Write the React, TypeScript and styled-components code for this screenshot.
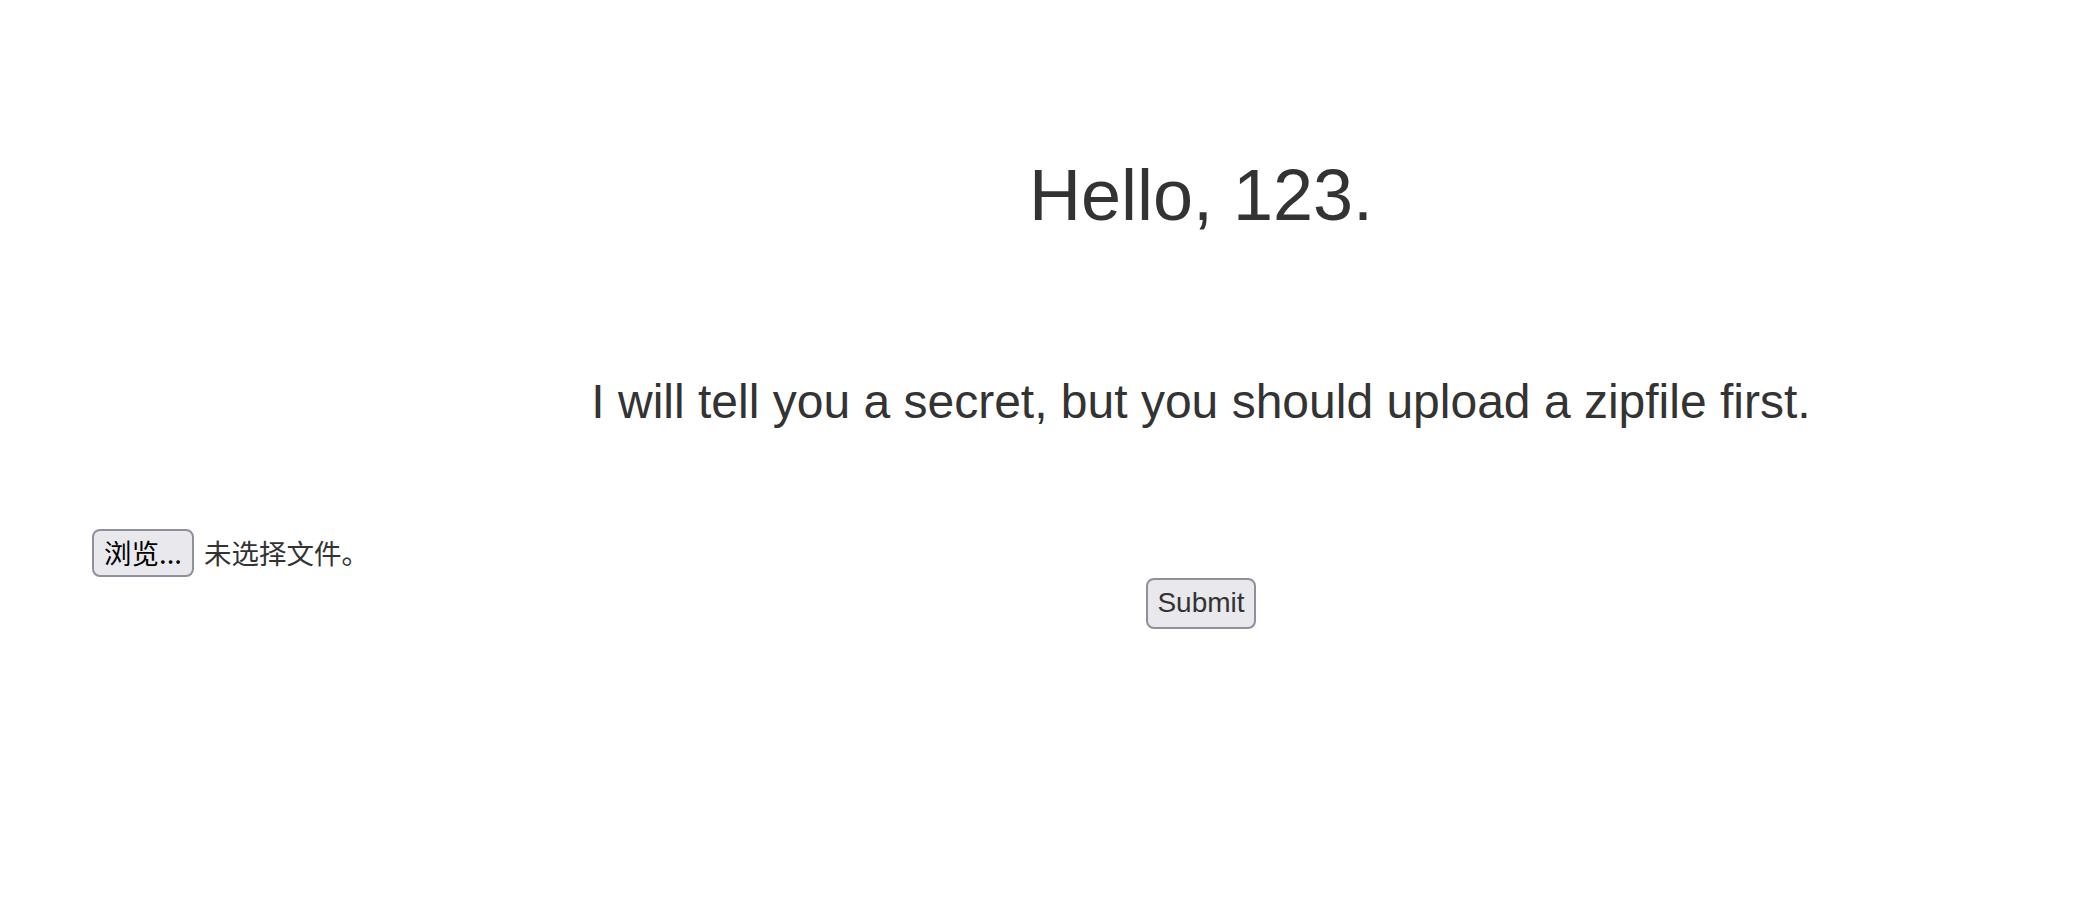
import React from 'react';
import styled, { createGlobalStyle } from 'styled-components';

const GlobalStyle = createGlobalStyle`
  html, body {
    margin: 0;
    padding: 0;
    background: #fff;
  }
  body {
    font-family: "Liberation Sans", Arial, "Noto Sans CJK SC", sans-serif;
    color: #333;
    font-size: 28px;
    line-height: 1.428571;
  }
`;

const Page = styled.div`
  width: 100%;
  min-height: 905px;
  padding-top: 156px;
  box-sizing: border-box;
`;

const Center = styled.div`
  padding-left: 318px;
  text-align: center;
`;

const Title = styled.h1`
  margin: 0;
  font-size: 72px;
  font-weight: 500;
  line-height: 1.1;
`;

const Lead = styled.h3`
  margin: 141px 0 0;
  font-size: 48px;
  font-weight: 500;
  line-height: 1.1;
`;

const Form = styled.form`
  margin-top: 100px;
`;

const FileRow = styled.div`
  display: flex;
  align-items: center;
  gap: 10px;
  margin-left: 92px;
  height: 48px;
  font-family: "Noto Sans CJK SC", "Liberation Sans", sans-serif;
  font-size: 27.5px;
`;

const NativeButton = styled.button`
  box-sizing: border-box;
  background: #e9e9ed;
  border: 2px solid #8f8f9d;
  border-radius: 8px;
  cursor: pointer;
`;

const BrowseButton = styled(NativeButton)`
  height: 48px;
  padding: 0 10px;
  color: #000;
  font-family: "Noto Sans CJK SC", "Liberation Sans", sans-serif;
  font-size: 27.5px;
  line-height: 1;
`;

const FileName = styled.span`
  color: #333;
`;

const SubmitButton = styled(NativeButton)`
  height: 51px;
  margin-top: 1px;
  padding: 0 9px;
  color: #333;
  font-family: "Liberation Sans", Arial, sans-serif;
  font-size: 28px;
  line-height: 1;
`;

const App = () => {
  return (
    <>
      <GlobalStyle />
      <Page>
        <Center>
          <Title>Hello, 123.</Title>
          <Lead>I will tell you a secret, but you should upload a zipfile first.</Lead>
        </Center>
        <Form onSubmit={(e) => e.preventDefault()}>
          <FileRow>
            <BrowseButton type='button'>浏览...</BrowseButton>
            <FileName>未选择文件。</FileName>
          </FileRow>
          <Center>
            <SubmitButton type='submit'>Submit</SubmitButton>
          </Center>
        </Form>
      </Page>
    </>
  );
};

export default App;
